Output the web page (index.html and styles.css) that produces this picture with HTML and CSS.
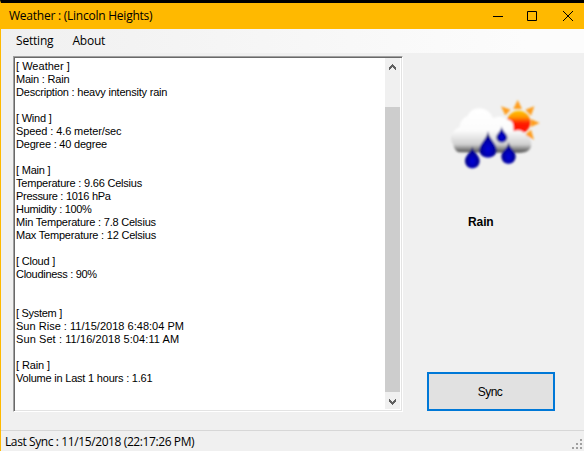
FILE: index.html
```
<!DOCTYPE html>
<html lang="en">
<head>
<meta charset="utf-8">
<title>Weather : (Lincoln Heights)</title>
<link rel="stylesheet" href="styles.css">
</head>
<body>
<div class="window">
  <header class="titlebar">
    <span class="title">Weather : (Lincoln Heights)</span>
    <svg class="controls" width="95" height="25" viewBox="0 0 95 25" fill="none" stroke="#000">
      <path d="M6 13.500h10"/>
      <path d="M40.500 8.500h9v9h-9z"/>
      <path d="M76 8l10 10M86 8l-10 10"/>
    </svg>
  </header>
  <nav class="menu"><span class="setting">Setting</span><span class="about">About</span></nav>
  <main class="content">
    <section class="report">
      <div class="lines">
        <div class="wide">[ Weather ]</div>
        <div>Main : Rain</div>
        <div>Description : heavy intensity rain</div>
        <div></div>
        <div>[ Wind ]</div>
        <div class="normal">Speed : 4.6 meter/sec</div>
        <div>Degree : 40 degree</div>
        <div></div>
        <div>[ Main ]</div>
        <div>Temperature : 9.66 Celsius</div>
        <div class="tight">Pressure : 1016 hPa</div>
        <div class="tight">Humidity : 100%</div>
        <div>Min Temperature : 7.8 Celsius</div>
        <div>Max Temperature : 12 Celsius</div>
        <div></div>
        <div>[ Cloud ]</div>
        <div class="tight">Cloudiness : 90%</div>
        <div></div>
        <div></div>
        <div class="tight">[ System ]</div>
        <div class="wide">Sun Rise : 11/15/2018 6:48:04 PM</div>
        <div class="wider">Sun Set : 11/16/2018 5:04:11 AM</div>
        <div></div>
        <div class="normal">[ Rain ]</div>
        <div>Volume in Last 1 hours : 1.61</div>
      </div>
      <div class="scrollbar">
        <svg class="arrow-up" width="7" height="6" viewBox="0 0 7 6" fill="#606060" shape-rendering="crispEdges"><path d="M3 0h1v1h1v1h1v1h1v3h-1v-1h-1v-1h-1v-1h-1v1h-1v1h-1v1h-1v-3h1v-1h1v-1h1z"/></svg>
        <div class="thumb"></div>
        <svg class="arrow-down" width="7" height="6" viewBox="0 0 7 6" fill="#606060" shape-rendering="crispEdges"><path d="M0 0h1v1h1v1h1v1h1v-1h1v-1h1v-1h1v3h-1v1h-1v1h-1v1h-1v-1h-1v-1h-1v-1h-1z"/></svg>
      </div>
    </section>
    <aside class="side">
      <svg class="weather" width="110" height="85" viewBox="0 0 330 255">
        <defs>
          <linearGradient id="cloud" x1="0" y1="55" x2="0" y2="187" gradientUnits="userSpaceOnUse"><stop offset="0" stop-color="#fff"/><stop offset=".5" stop-color="#fcfcfc"/><stop offset=".82" stop-color="#d0d0d0"/><stop offset="1" stop-color="#505050"/></linearGradient>
          <linearGradient id="sun" x1="0" y1="62" x2="0" y2="130" gradientUnits="userSpaceOnUse"><stop offset="0" stop-color="#ffc400"/><stop offset=".28" stop-color="#ff9800"/><stop offset=".55" stop-color="#ff1c00"/><stop offset="1" stop-color="#ff1000"/></linearGradient>
          <radialGradient id="drop" cx=".5" cy=".68" r=".6"><stop offset="0" stop-color="#0000dc"/><stop offset=".55" stop-color="#0000a4"/><stop offset="1" stop-color="#000060"/></radialGradient>
          <filter id="soft"><feGaussianBlur stdDeviation="2.600"/></filter>
        </defs>
        <g filter="url(#soft)">
          <path fill="#ff9d1c" d="M233 30l13 27h-26zM183 49l29 10-16 17zM283 49l-10 28-17-18zM299 99l-27 12v-24zM282 149l-27-15 18-15zM184 98l22-10v20z"/>
          <circle cx="236" cy="97" r="35" fill="url(#sun)"/>
          <path fill="url(#cloud)" d="M58 187C40 183 44 166 35 156c-7-18 4-36 24-45 2-17 10-28 24-33 7-17 23-26 43-22 14 2 27 12 33 29 17-8 32-6 41 4 13 0 20 8 20 20l1 15c15-8 31-1 36 12 23 10 22 45-1 50-9 3-18 2-28 2z"/>
          <g fill="url(#drop)">
            <path d="M144 123c2 22 26 37 26 57 0 30-52 30-52 0 0-20 24-35 26-57z"/>
            <path d="M185 109c1 15 17 22 17 33 0 21-33 21-33 0 0-11 15-18 16-33z"/>
            <path d="M97 169c2 17 22 27 22 43 0 30-44 30-44 0 0-16 20-26 22-43z"/>
            <path d="M206 156c2 17 21 28 21 43 0 30-43 30-43 0 0-15 20-26 22-43z"/>
          </g>
        </g>
      </svg>
      <div class="condition">Rain</div>
      <button class="sync">Sync</button>
    </aside>
  </main>
  <footer class="status"><span class="last">Last Sync : 11/15/2018 (22:17:26 PM)</span>
    <svg class="grip" width="11" height="11" viewBox="0 0 11 11" fill="#a0a0a0" shape-rendering="crispEdges"><path d="M8 0h2v2h-2zM4 4h2v2h-2zM8 4h2v2h-2zM0 8h2v2h-2zM4 8h2v2h-2zM8 8h2v2h-2z"/></svg>
  </footer>
</div>
</body>
</html>
```
FILE: styles.css
```
* { box-sizing: border-box; }
body { margin: 0; color: #000; }
.window {
  width: 584px;
  height: 451px;
  display: flex;
  flex-direction: column;
  background: #f0f0f0;
  border-top: 3px solid #000;
  border-left: 1px solid #ffb900;
  font-family: "Open Sans", "Noto Sans", sans-serif;
  font-size: 12px;
  overflow: hidden;
}
.titlebar {
  height: 26px;
  flex: none;
  display: flex;
  justify-content: space-between;
  background: #ffb900;
  padding-left: 8px;
}
.title { line-height: 26px; letter-spacing: -0.24px; }
.controls { margin-right: 2px; }
.menu {
  height: 24px;
  flex: none;
  display: flex;
  gap: 19px;
  padding-left: 15px;
  line-height: 24px;
  letter-spacing: -0.2px;
  background: linear-gradient(90deg, #f0f0f0, #fcfcfc 90%);
}
.content { display: flex; height: 377px; flex: none; padding: 3px 0 0 12px; }
.report {
  width: 390px;
  height: 356px;
  display: flex;
  background: #fff;
  border: 1px solid;
  border-color: #a0a0a0 #fff #fff #a0a0a0;
  box-shadow: inset 1px 1px #696969, inset -1px -1px #e3e3e3;
  padding: 2px;
}
.lines {
  flex: 1;
  padding-top: 1px;
  font: 11px/13px "Liberation Sans", Arial, sans-serif;
  letter-spacing: -0.21px;
  white-space: nowrap;
}
.lines div { height: 13px; }
.lines .tight { letter-spacing: -0.3px; }
.lines .normal { letter-spacing: -0.1px; }
.lines .wide { letter-spacing: 0.02px; }
.lines .wider { letter-spacing: 0.09px; }
.scrollbar {
  width: 15px;
  margin: -1px 0 0;
  display: flex;
  flex-direction: column;
  align-items: center;
  background: #f0f0f0;
}
.arrow-up { margin: 6px 0 37px; flex: none; }
.thumb { width: 15px; height: 285px; background: #cdcdcd; flex: none; }
.arrow-down { margin-top: 7px; flex: none; }
.side { width: 181px; display: flex; flex-direction: column; font-family: "Liberation Sans", Arial, sans-serif; }
.weather { margin: 34px 0 0 37px; flex: none; }
.condition { margin: 39px 0 0 65px; font-size: 12px; line-height: 16px; font-weight: bold; letter-spacing: -0.1px; }
.sync {
  width: 128px;
  height: 39px;
  margin: 142px 0 0 24px;
  padding: 0 2px 0 0;
  border: 2px solid #0078d7;
  background: #e1e1e1;
  color: #000;
  font: 12px "Liberation Sans", Arial, sans-serif;
  letter-spacing: -0.5px;
}
.status {
  height: 21px;
  flex: none;
  display: flex;
  justify-content: space-between;
  border-top: 1px solid #d7d7d7;
  padding-left: 4px;
  line-height: 22px;
}
.last { letter-spacing: -0.4px; }
.grip { margin: 8px 1px 0 0; }
```
